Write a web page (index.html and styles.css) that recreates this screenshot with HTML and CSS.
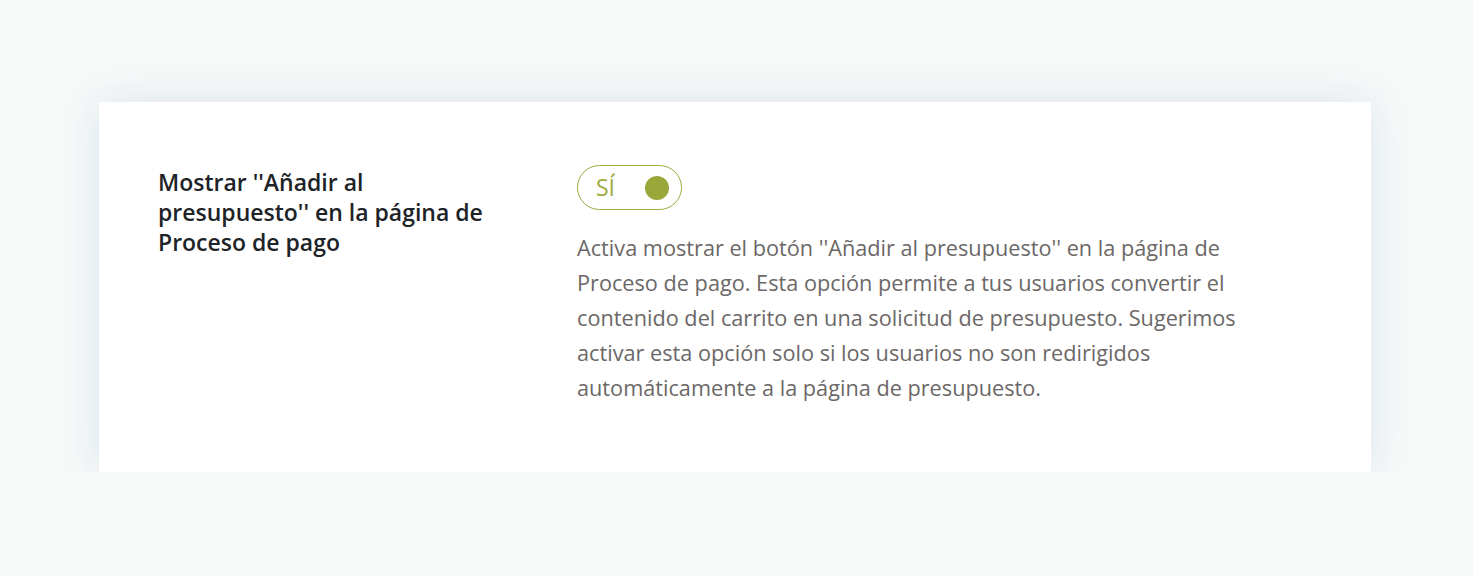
FILE: index.html
```html
<!DOCTYPE html>
<html lang="es">
<head>
  <meta charset="UTF-8">
  <meta name="viewport" content="width=device-width, initial-scale=1.0">
  <title>Opciones de presupuesto</title>
  <link rel="stylesheet" href="styles.css">
</head>
<body>
  <div class="page">
    <div class="card">
      <div class="option-row">
        <label class="option-label" for="showCheckout">Mostrar ''Añadir al presupuesto'' en la página de Proceso de pago</label>
        <div class="option-field">
          <button class="toggle is-on" id="showCheckout" type="button">
            <span class="toggle-text">SÍ</span>
            <span class="toggle-knob"></span>
          </button>
          <p class="option-desc">Activa mostrar el botón ''Añadir al presupuesto'' en la página de Proceso de pago. Esta opción permite a tus usuarios convertir el contenido del carrito en una solicitud de presupuesto. Sugerimos activar esta opción solo si los usuarios no son redirigidos automáticamente a la página de presupuesto.</p>
        </div>
      </div>
    </div>
  </div>
</body>
</html>
```

FILE: styles.css
```css
html, body {
  margin: 0;
  padding: 0;
}
body {
  background: #f8f9f9;
  font-family: "Open Sans", "Noto Sans", sans-serif;
  color: #1d2327;
}
.page {
  padding: 102px 102px 0 99px;
}
.card {
  background: #fff;
  box-shadow: 0 0 40px rgba(190, 212, 224, 0.55);
  padding: 63px 59px 65px;
  height: 370px;
  box-sizing: border-box;
}
.option-row {
  display: flex;
  gap: 79px;
}
.option-label {
  flex: 0 0 340px;
  font-size: 23px;
  font-weight: 600;
  line-height: 30px;
  margin-top: 2px;
  color: #1d2327;
}
.option-field {
  flex: 0 1 670px;
}
.toggle {
  display: flex;
  align-items: center;
  justify-content: space-between;
  width: 105px;
  height: 45px;
  box-sizing: border-box;
  padding: 0 12px 0 18px;
  border: 1px solid #9eab3e;
  border-radius: 23px;
  background: #fff;
  font-family: inherit;
  cursor: pointer;
}
.toggle-text {
  color: #9eab3e;
  font-size: 23px;
  font-weight: 400;
  line-height: 1;
}
.toggle-knob {
  width: 24px;
  height: 24px;
  border-radius: 50%;
  background: #9aa73a;
}
.option-desc {
  margin: 20px 0 0;
  font-size: 21.7px;
  line-height: 35px;
  color: #6b6867;
}
```
